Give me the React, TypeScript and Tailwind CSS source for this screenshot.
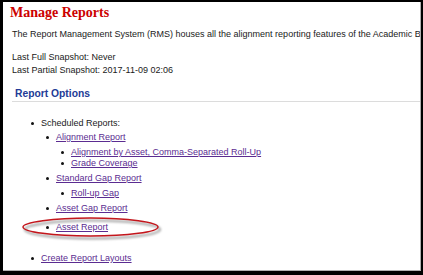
import type { ReactNode } from "react";

export default function App() {
  return (
    <div className="w-[423px] h-[275px] overflow-hidden bg-black pt-[2px] pl-[3px] pr-[2px] pb-[4px]">
      <div className="relative h-full bg-white border-r border-b border-[#b0b0b0] overflow-hidden font-['Liberation_Sans',Arial,sans-serif] text-[9px] leading-[11px] text-[#1a1a1a]">
        <h1 className="pl-[7px] pt-[3px] font-['Liberation_Serif','Times_New_Roman',serif] font-bold text-[14px] leading-[16px] text-[#cc0000]">
          Manage Reports
        </h1>
        <p className="pl-[9px] mt-[8px] whitespace-nowrap">
          The Report Management System (RMS) houses all the alignment reporting features of the Academic Benchmarks
        </p>
        <div className="pl-[9px] mt-[11px] leading-[12.5px]">
          <p>Last Full Snapshot: Never</p>
          <p>Last Partial Snapshot: 2017-11-09 02:06</p>
        </div>
        <h2 className="ml-[9px] mt-[11px] pl-[3px] pb-[1px] border-b border-[#dcdcdc] font-bold text-[10.3px] leading-[13px] text-[#233b96]">
          Report Options
        </h2>

        {/* report list */}
        <ul className="mt-[16px] pl-[28px]">
          <Item>
            Scheduled Reports:
            <ul className="pl-[5px] mt-[3px]">
              <Item>
                <Link>Alignment Report</Link>
                <ul className="pl-[5px] mt-[4px]">
                  <Item><Link>Alignment by Asset, Comma-Separated Roll-Up</Link></Item>
                  <Item><Link>Grade Coverage</Link></Item>
                </ul>
              </Item>
              <Item className="mt-[4px]">
                <Link>Standard Gap Report</Link>
                <ul className="pl-[5px] mt-[4px]">
                  <Item><Link>Roll-up Gap</Link></Item>
                </ul>
              </Item>
              <Item className="mt-[4px]"><Link>Asset Gap Report</Link></Item>
              <Item className="mt-[8px]"><Link>Asset Report</Link></Item>
            </ul>
          </Item>
          <Item className="mt-[20px]"><Link>Create Report Layouts</Link></Item>
        </ul>

        {/* highlight ring */}
        <svg className="absolute left-[18px] top-[213px]" width="145" height="30" viewBox="0 0 145 30">
          <defs>
            <filter id="blur" x="-10%" y="-50%" width="120%" height="200%">
              <feGaussianBlur stdDeviation="1.2" />
            </filter>
          </defs>
          <ellipse cx="71.5" cy="14.5" rx="67.5" ry="9" fill="none" stroke="#000" strokeOpacity="0.3" strokeWidth="2.5" filter="url(#blur)" />
          <ellipse cx="69.5" cy="12" rx="67.5" ry="9" fill="none" stroke="#c4161c" strokeWidth="1.5" />
        </svg>
      </div>
    </div>
  );
}

function Item({ children, className = "" }: { children: ReactNode; className?: string }) {
  return (
    <li className={`flex items-start ${className}`}>
      <span className="w-[3px] h-[3px] mt-[4px] mr-[7px] shrink-0 rounded-full bg-[#111]" />
      <div>{children}</div>
    </li>
  );
}

function Link({ children }: { children: ReactNode }) {
  return <a className="text-[#5b2c91] underline">{children}</a>;
}
